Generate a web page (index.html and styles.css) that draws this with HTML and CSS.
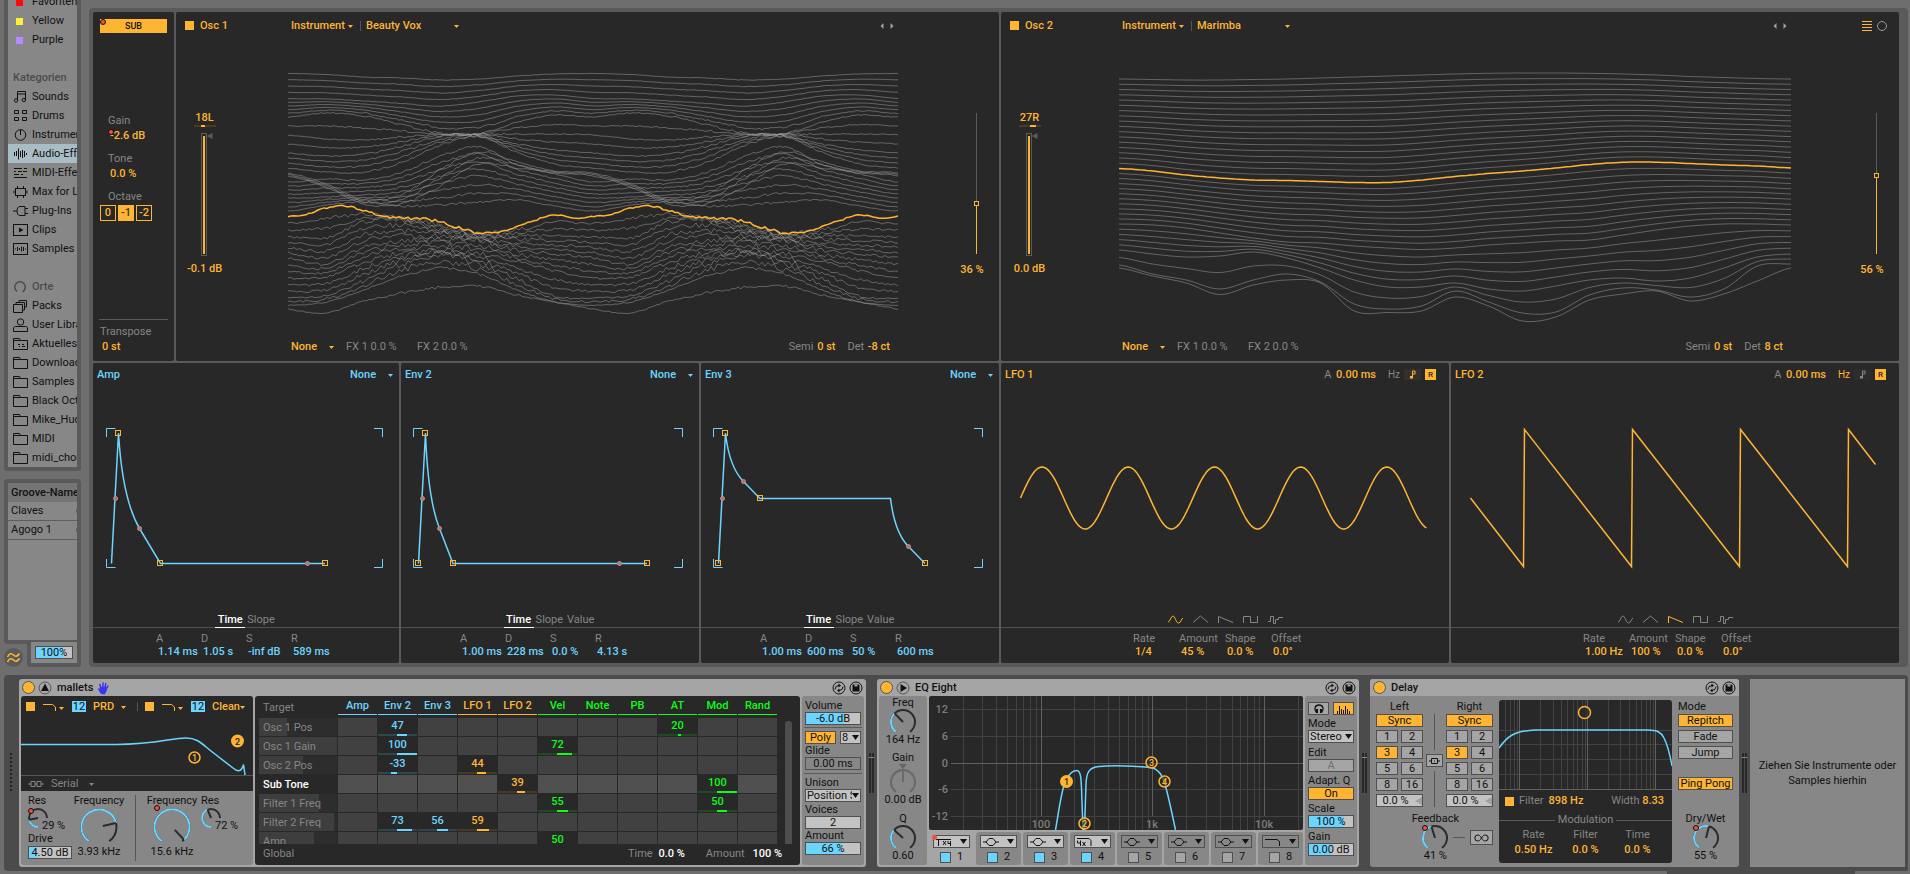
FILE: index.html
```html
<!DOCTYPE html>
<html lang="de">
<head>
<meta charset="utf-8">
<title>Wavetable – mallets</title>
<link rel="stylesheet" href="styles.css">
</head>
<body>
<svg class="sprite" aria-hidden="true">
  <symbol id="i-sounds" viewBox="0 0 16 14"><path d="M4.500 10.500V1.500h8v8.500M4.500 4h8"/><circle cx="3" cy="10.500" r="1.700"/><circle cx="10.800" cy="10" r="1.700"/></symbol>
  <symbol id="i-drums" viewBox="0 0 16 14"><path d="M1.500 1.500h4v3h-4zM9.500 1.500h4v3h-4zM1.500 8.500h4v3h-4zM9.500 8.500h4v3h-4z"/></symbol>
  <symbol id="i-instr" viewBox="0 0 16 14"><circle cx="7.500" cy="7" r="5.300"/><path d="M7.500 1.500V7"/></symbol>
  <symbol id="i-audio" viewBox="0 0 16 14"><path d="M1.500 5v4M3.500 4v5M5.500 1.500v11M7.500 4v6M9.500 3v8M11.500 4v6M13.500 6v2"/></symbol>
  <symbol id="i-midi" viewBox="0 0 16 14"><path d="M1 2.500h8M11 2.500h3M1 5.500h2M5 5.500h4M10 5.500h4M1 8.500h5M8 8.500h2M1 11.500h13"/></symbol>
  <symbol id="i-max" viewBox="0 0 16 14"><rect x="2.500" y="3.500" width="10" height="7"/><path d="M4.500 3V1M10.500 3V1M4.500 11v2M10.500 11v2M1 5.500v3M14 5.500v3"/></symbol>
  <symbol id="i-plug" viewBox="0 0 16 14"><path d="M0 7h4M12 2.500H7C5 2.500 4 4.500 4 7s1 4.500 3 4.500h5zM12 4.500h3M12 9.500h3"/></symbol>
  <symbol id="i-clips" viewBox="0 0 16 14"><rect x=".5" y="1.500" width="14" height="11"/><path class="solid" d="M6 4.500L10.500 7 6 9.500z"/></symbol>
  <symbol id="i-samples" viewBox="0 0 16 14"><rect x=".5" y="1.500" width="14" height="11"/><path d="M2.500 6.500v1M4.500 5v4M6.500 6v2M8.500 4.500v5M10.500 5v4M12.500 6.500v1"/></symbol>
  <symbol id="i-orte" viewBox="0 0 16 14"><path d="M4 11.500A5.300 5.300 0 1 1 9.500 11.800" stroke-width="1.500"/></symbol>
  <symbol id="i-packs" viewBox="0 0 16 14"><path d="M.5 5.500h9v8h-9zM3 5V3.500h8.500V11H10M6 3V1.500h7.500V8H12"/></symbol>
  <symbol id="i-user" viewBox="0 0 16 14"><circle cx="7.500" cy="4" r="3.200"/><path d="M.5 13.500V10c0-1 1-1.500 2-1.500h10c1 0 2 .5 2 1.500v3.500z"/></symbol>
  <symbol id="i-recent" viewBox="0 0 16 14"><path d="M.5 12.500v-11h6l1 2h7v9zM.5 3.500h7M5 7.500h2M9 7.500h2M6 9.500h1M9 9.500h3"/></symbol>
  <symbol id="i-folder" viewBox="0 0 16 14"><path d="M.5 12.500v-11h6l1 2h7v9zM.5 3.500h7"/></symbol>
  <symbol id="i-swap" viewBox="0 0 14 14"><circle cx="7" cy="7" r="6"/><path d="M3 8.500L4 5.500 7 4.500M11 5.500L10 8.500 7 9.500"/><path class="solid" d="M6.500 2.500l2.500 2-2.500 2zM7.500 7.500l-2.500 2 2.500 2z"/></symbol>
  <symbol id="i-save" viewBox="0 0 14 14"><circle cx="7" cy="7" r="6"/><path class="solid" d="M3.500 3.500h6l1 1v6h-7z"/><path class="notch" d="M5.500 3.500h3v2h-3z"/></symbol>
  <symbol id="i-note" viewBox="0 0 7 9"><path d="M3.500 8V1H6v3H3.500"/><path class="solid" d="M1 6h3v2.500H1z"/></symbol>
  <symbol id="w-sine" viewBox="0 0 15 9"><path d="M0 7C2 7 3 1 5 1S8 8 10.500 8 13 4 15 3"/></symbol>
  <symbol id="w-tri" viewBox="0 0 15 9"><path d="M0 7.500l7.500-6.500L15 7.500"/></symbol>
  <symbol id="w-saw" viewBox="0 0 15 9"><path d="M.5 8V1.500L15 7.500"/></symbol>
  <symbol id="w-square" viewBox="0 0 15 9"><path d="M.5 8V1.500h7v6h7V1"/></symbol>
  <symbol id="w-random" viewBox="0 0 15 9"><path d="M0 6.500h2.500v-5h3v7h2v-4h3v-2H15"/></symbol>
  <symbol id="f-low" viewBox="0 0 15 8"><path d="M0 1.500h9.500l3 2.500v4"/></symbol>
  <symbol id="f-bell" viewBox="0 0 16 10"><path d="M0 5h3l3-3.500h4L13 5h3M3 5l3 3.500h4L13 5"/></symbol>
</svg>

<div class="workspace">
  <aside class="sidebar">
    <nav class="browser" aria-label="Browser">
      <ul class="browser-list">
        <li><i class="swatch red"></i>Favoriten</li>
        <li><i class="swatch yellow"></i>Yellow</li>
        <li><i class="swatch purple"></i>Purple</li>
        <li></li>
        <li class="heading">Kategorien</li>
        <li><svg><use href="#i-sounds"/></svg>Sounds</li>
        <li><svg><use href="#i-drums"/></svg>Drums</li>
        <li><svg><use href="#i-instr"/></svg>Instrumente</li>
        <li class="selected"><svg><use href="#i-audio"/></svg>Audio-Effekte</li>
        <li><svg><use href="#i-midi"/></svg>MIDI-Effekte</li>
        <li><svg><use href="#i-max"/></svg>Max for Live</li>
        <li><svg><use href="#i-plug"/></svg>Plug-Ins</li>
        <li><svg><use href="#i-clips"/></svg>Clips</li>
        <li><svg><use href="#i-samples"/></svg>Samples</li>
        <li></li>
        <li class="heading"><svg><use href="#i-orte"/></svg>Orte</li>
        <li><svg><use href="#i-packs"/></svg>Packs</li>
        <li><svg><use href="#i-user"/></svg>User Library</li>
        <li><svg><use href="#i-recent"/></svg>Aktuelles Projekt</li>
        <li><svg><use href="#i-folder"/></svg>Downloads</li>
        <li><svg><use href="#i-folder"/></svg>Samples</li>
        <li><svg><use href="#i-folder"/></svg>Black Octopus</li>
        <li><svg><use href="#i-folder"/></svg>Mike_Huckaby</li>
        <li><svg><use href="#i-folder"/></svg>MIDI</li>
        <li><svg><use href="#i-folder"/></svg>midi_chords</li>
      </ul>
    </nav>
    <div class="groove">
      <div class="groove-list">
        <h2>Groove-Name</h2>
        <p>Claves<i class="ring"></i></p>
        <p>Agogo 1<i class="ring"></i></p>
      </div>
      <div class="groove-foot">
        <button class="groove-button" aria-label="Groove Pool"><svg viewBox="0 0 19 19"><path d="M3.500 9c2-4 4-4 6-2s4 1.500 6-1.500M3.500 14c2-4 4-4 6-2s4 1.500 6-1.500"/></svg></button>
        <div class="groove-tab"><input class="field fill-76" value="100%" aria-label="Globaler Groove-Anteil"></div>
      </div>
    </div>
  </aside>

  <main class="instrument">
    <div class="half left">
      <div class="row-top">
        <section class="panel sub">
          <button class="sub-button">SUB<i class="dot"></i></button>
          <dl class="sub-values">
            <dt>Gain</dt><dd><i class="dot"></i>-2.6 dB</dd>
            <dt>Tone</dt><dd>0.0 %</dd>
            <dt>Octave</dt>
          </dl>
          <div class="octaves"><button>0</button><button class="on">-1</button><button>-2</button></div>
          <dl class="transpose"><dt>Transpose</dt><dd>0 st</dd></dl>
        </section>
        <section class="panel osc osc-1">
          <label class="osc-name"><input type="checkbox" class="tick" checked>Osc 1</label>
          <div class="osc-bar">
            <select class="pick cat" aria-label="Kategorie"><option>Instrument</option></select>
            <select class="pick table" aria-label="Wavetable"><option>Beauty Vox</option></select>
            <span class="steps"><button aria-label="Zurück"><svg viewBox="0 0 4 6"><path d="M3.500 0v6L.5 3z"/></svg></button><button aria-label="Weiter"><svg viewBox="0 0 4 6"><path d="M.5 0v6l3-3z"/></svg></button></span>
          </div>
          <div></div>
          <div class="mix">
            <output>18L</output><i class="pan pan-l"></i>
            <div class="level"><input type="range" class="fader" aria-label="Osc 1 Gain" value="98"><i class="mark"></i></div>
            <output>-0.1 dB</output>
          </div>
          <svg class="wave" id="wave1" viewBox="0 0 610 292" preserveAspectRatio="none"></svg>
          <div class="position"><input type="range" class="line p36" aria-label="Osc 1 Position" value="35"><output>36 %</output></div>
          <div class="osc-foot">
            <select class="pick none" aria-label="Effekt"><option>None</option></select>
            <span class="fx">FX 1 0.0 %</span><span class="fx">FX 2 0.0 %</span>
            <span class="semi">Semi <b>0 st</b></span><span class="det">Det <b>-8 ct</b></span>
          </div>
        </section>
      </div>
      <div class="row-bottom envs">
        <section class="panel env">
          <header><h3>Amp</h3><select class="pick none" aria-label="Amp Loop"><option>None</option></select></header>
          <svg class="graph" viewBox="0 0 306 226">
            <path class="corner" d="M13.500 51v-8.500h9M281 42.500h8.500V51M13.500 173v8.500h9M281 181.500h8.500V173"/>
            <path class="curve" d="M18.500 177.500L25.500 47C28 90 34 121 46.500 142.500L67.500 177.500H232"/>
            <g class="mid"><circle cx="22.500" cy="112.500" r="2"/><circle cx="46.500" cy="142.500" r="2"/><circle cx="214.500" cy="177.500" r="2"/></g>
            <g class="node"><rect x="22.500" y="44.500" width="5" height="5"/><rect x="64.500" y="174.500" width="5" height="5"/><rect x="229.500" y="174.500" width="5" height="5"/></g>
          </svg>
          <div class="tabs"><button class="on">Time</button><button>Slope</button></div>
          <dl class="params"><div><dt>A</dt><dd>1.14 ms</dd></div><div><dt>D</dt><dd>1.05 s</dd></div><div><dt>S</dt><dd>-inf dB</dd></div><div><dt>R</dt><dd>589 ms</dd></div></dl>
        </section>
        <section class="panel env">
          <header><h3>Env 2</h3><select class="pick none" aria-label="Env 2 Loop"><option>None</option></select></header>
          <svg class="graph" viewBox="0 0 298 226">
            <path class="corner" d="M12.500 51v-8.500h9M273 42.500h8.500V51M12.500 173v8.500h9M273 181.500h8.500V173"/>
            <path class="curve" d="M17.500 177.500L24.500 47C26 90 30 121 38.500 142.500L52 177.500H246"/>
            <g class="mid"><circle cx="21.500" cy="112.500" r="2"/><circle cx="38.500" cy="142.500" r="2"/><circle cx="218.500" cy="177.500" r="2"/></g>
            <g class="node"><rect x="14.500" y="174.500" width="5" height="5"/><rect x="21.500" y="44.500" width="5" height="5"/><rect x="49.500" y="174.500" width="5" height="5"/><rect x="243.500" y="174.500" width="5" height="5"/></g>
          </svg>
          <div class="tabs"><button class="on">Time</button><button>Slope</button><button>Value</button></div>
          <dl class="params"><div><dt>A</dt><dd>1.00 ms</dd></div><div><dt>D</dt><dd>228 ms</dd></div><div><dt>S</dt><dd>0.0 %</dd></div><div><dt>R</dt><dd>4.13 s</dd></div></dl>
        </section>
        <section class="panel env">
          <header><h3>Env 3</h3><select class="pick none" aria-label="Env 3 Loop"><option>None</option></select></header>
          <svg class="graph" viewBox="0 0 298 226">
            <path class="corner" d="M12.500 51v-8.500h9M273 42.500h8.500V51M12.500 173v8.500h9M273 181.500h8.500V173"/>
            <path class="curve" d="M17.500 177.500L24.500 47C27 70 33 86 42.500 95.500L59 112.500H189.500C192 133 198 151 207.500 160.500L224 177.500"/>
            <g class="mid"><circle cx="21.500" cy="112.500" r="2"/><circle cx="42.500" cy="95.500" r="2"/><circle cx="207.500" cy="160.500" r="2"/></g>
            <g class="node"><rect x="14.500" y="174.500" width="5" height="5"/><rect x="21.500" y="44.500" width="5" height="5"/><rect x="56.500" y="109.500" width="5" height="5"/><rect x="221.500" y="174.500" width="5" height="5"/></g>
          </svg>
          <div class="tabs"><button class="on">Time</button><button>Slope</button><button>Value</button></div>
          <dl class="params"><div><dt>A</dt><dd>1.00 ms</dd></div><div><dt>D</dt><dd>600 ms</dd></div><div><dt>S</dt><dd>50 %</dd></div><div><dt>R</dt><dd>600 ms</dd></div></dl>
        </section>
      </div>
    </div>

    <div class="half right">
      <div class="row-top">
        <section class="panel osc osc-2">
          <label class="osc-name"><input type="checkbox" class="tick" checked>Osc 2</label>
          <div class="osc-bar">
            <select class="pick cat" aria-label="Kategorie"><option>Instrument</option></select>
            <select class="pick table" aria-label="Wavetable"><option>Marimba</option></select>
            <span class="steps"><button aria-label="Zurück"><svg viewBox="0 0 4 6"><path d="M3.500 0v6L.5 3z"/></svg></button><button aria-label="Weiter"><svg viewBox="0 0 4 6"><path d="M.5 0v6l3-3z"/></svg></button></span>
          </div>
          <div class="views">
            <button aria-label="Linear"><svg viewBox="0 0 10 10"><path d="M0 .5h10M0 3.500h10M0 6.500h10M0 9.500h10"/></svg></button>
            <button class="polar" aria-label="Polar"><svg viewBox="0 0 10 10"><circle cx="5" cy="5" r="4.500"/></svg></button>
          </div>
          <div class="mix">
            <output>27R</output><i class="pan pan-r"></i>
            <div class="level"><input type="range" class="fader" aria-label="Osc 2 Gain" value="99"><i class="mark"></i></div>
            <output>0.0 dB</output>
          </div>
          <svg class="wave" id="wave2" viewBox="0 0 672 292" preserveAspectRatio="none"></svg>
          <div class="position"><input type="range" class="line p56" aria-label="Osc 2 Position" value="56"><output>56 %</output></div>
          <div class="osc-foot">
            <select class="pick none" aria-label="Effekt"><option>None</option></select>
            <span class="fx">FX 1 0.0 %</span><span class="fx">FX 2 0.0 %</span>
            <span class="semi">Semi <b>0 st</b></span><span class="det">Det <b>8 ct</b></span>
          </div>
        </section>
      </div>
      <div class="row-bottom lfos">
        <section class="panel lfo">
          <header><h3>LFO 1</h3><span class="attack">A <b>0.00 ms</b></span><button class="hz">Hz</button><button class="note on" aria-label="Sync"><svg><use href="#i-note"/></svg></button><button class="retrig">R</button></header>
          <svg class="graph" viewBox="0 0 448 226"><path class="curve" id="sine"/></svg>
          <div class="shapes">
            <button class="on" aria-label="Sinus"><svg><use href="#w-sine"/></svg></button><button aria-label="Dreieck"><svg><use href="#w-tri"/></svg></button><button aria-label="Sägezahn"><svg><use href="#w-saw"/></svg></button><button aria-label="Rechteck"><svg><use href="#w-square"/></svg></button><button aria-label="Zufall"><svg><use href="#w-random"/></svg></button>
          </div>
          <dl class="params"><div><dt>Rate</dt><dd>1/4</dd></div><div><dt>Amount</dt><dd>45 %</dd></div><div><dt>Shape</dt><dd>0.0 %</dd></div><div><dt>Offset</dt><dd>0.0°</dd></div></dl>
        </section>
        <section class="panel lfo">
          <header><h3>LFO 2</h3><span class="attack">A <b>0.00 ms</b></span><button class="hz on">Hz</button><button class="note" aria-label="Sync"><svg><use href="#i-note"/></svg></button><button class="retrig">R</button></header>
          <svg class="graph" viewBox="0 0 448 226"><path class="curve" d="M19.500 112L72.500 180.500L73.500 43.500L180.500 180.500L181.500 43.500L288.500 180.500L289.500 43.500L396.500 180.500L397.500 43.500L424.500 78.500"/></svg>
          <div class="shapes">
            <button aria-label="Sinus"><svg><use href="#w-sine"/></svg></button><button aria-label="Dreieck"><svg><use href="#w-tri"/></svg></button><button class="on" aria-label="Sägezahn"><svg><use href="#w-saw"/></svg></button><button aria-label="Rechteck"><svg><use href="#w-square"/></svg></button><button aria-label="Zufall"><svg><use href="#w-random"/></svg></button>
          </div>
          <dl class="params"><div><dt>Rate</dt><dd>1.00 Hz</dd></div><div><dt>Amount</dt><dd>100 %</dd></div><div><dt>Shape</dt><dd>0.0 %</dd></div><div><dt>Offset</dt><dd>0.0°</dd></div></dl>
        </section>
      </div>
    </div>
  </main>
</div>

<footer class="chain">
  <i class="grip"></i>
  <section class="device wavetable">
    <header class="title"><button class="power" aria-label="Gerät ein"></button><button class="round" aria-label="Ausklappen"><svg viewBox="0 0 14 14"><circle cx="7" cy="7" r="6"/><path class="solid" d="M7 2.500L11 10H3z"/></svg></button><h2>mallets</h2>
      <svg class="hand" viewBox="0 0 11 12"><path d="M3 10.500L.8 7M3 6L1.800 2.500M5 5V1M7 5.500L7.800 1.500M8 7.500l2-3.500"/><path class="palm" d="M2.500 5.500h5.500v3l-1.500 3h-2.500l-1.500-2z"/></svg>
      <button class="round end" aria-label="Hot-Swap"><svg><use href="#i-swap"/></svg></button><button class="round" aria-label="Speichern"><svg><use href="#i-save"/></svg></button></header>
    <div class="body">
      <div class="filters">
        <div class="filter-bar">
          <input type="checkbox" class="tick" checked aria-label="Filter 1"><button class="ftype" aria-label="Filtertyp 1"><svg><use href="#f-low"/></svg></button><button class="slope">12</button>
          <select class="pick circ" aria-label="Schaltung 1"><option>PRD</option></select>
          <i class="sep"></i>
          <input type="checkbox" class="tick" checked aria-label="Filter 2"><button class="ftype" aria-label="Filtertyp 2"><svg><use href="#f-low"/></svg></button><button class="slope">12</button>
          <select class="pick clean" aria-label="Schaltung 2"><option>Clean</option></select>
        </div>
        <svg class="filter-curve" viewBox="0 0 232 58">
          <path class="curve" d="M0 27.500H95C135 27.500 150 21 165 21C176 21 180 26 190 34L212 51C216 54.500 219 54.500 220.500 52C222 50 222 49 222.500 47.500L224 58"/>
          <circle class="ring-node" cx="173.500" cy="40.500" r="5.500"/><text class="n" x="173.500" y="44">1</text>
          <circle class="full-node" cx="216.500" cy="24" r="6.500"/><text class="n dark" x="216.500" y="27.500">2</text>
        </svg>
        <div class="routing"><svg viewBox="0 0 16 6"><path d="M0 3h3M7 3h2M13 3h3M3 .5h4v5H3zM9 .5h4v5H9z"/></svg><select class="pick serial" aria-label="Routing"><option>Serial</option></select></div>
        <div class="filter-knobs">
          <div class="res"><span>Res</span><span class="knob-wrap"><svg class="knob small" data-start="180" data-sweep="270" data-value="0.29"></svg><i class="dot"></i></span><output>29 %</output><label for="drive">Drive</label><input class="field fill-20" id="drive" value="4.50 dB"></div>
          <div class="freq"><span>Frequency</span><svg class="knob big" data-value="0.767"></svg><output>3.93 kHz</output></div>
          <i class="rule"></i>
          <div class="freq"><span>Frequency</span><span class="knob-wrap"><svg class="knob big" data-value="0.975"></svg><i class="dot"></i></span><output>15.6 kHz</output></div>
          <div class="res second"><span>Res</span><svg class="knob small" data-start="180" data-sweep="270" data-value="0.585"></svg><output>72 %</output></div>
        </div>
      </div>
      <div class="matrix">
        <div class="matrix-view"><table id="matrix"></table><i class="thumb"></i></div>
        <div class="matrix-foot"><span>Global</span><span class="time">Time <b>0.0 %</b></span><span class="amt">Amount <b>100 %</b></span></div>
      </div>
      <div class="side voices">
        <label for="vol">Volume</label><input class="field fill-70" id="vol" value="-6.0 dB">
        <hr>
        <div class="pair"><button class="btn on">Poly</button><select class="drop" aria-label="Stimmen"><option>8</option></select></div>
        <label for="glide">Glide</label><input class="field flat" id="glide" value="0.00 ms">
        <hr>
        <label for="uni">Unison</label><select class="drop" id="uni"><option>Position Spread</option></select>
        <label for="voi">Voices</label><input class="field" id="voi" value="2">
        <label for="amo">Amount</label><input class="field fill-66" id="amo" value="66 %">
      </div>
    </div>
  </section>
  <i class="meter"></i>
  <section class="device eq">
    <header class="title"><button class="power" aria-label="Gerät ein"></button><button class="round" aria-label="Ausklappen"><svg viewBox="0 0 14 14"><circle cx="7" cy="7" r="6"/><path class="solid" d="M4.500 3L11 7l-6.500 4z"/></svg></button><h2>EQ Eight</h2>
      <button class="round end" aria-label="Hot-Swap"><svg><use href="#i-swap"/></svg></button><button class="round" aria-label="Speichern"><svg><use href="#i-save"/></svg></button></header>
    <div class="body">
      <div class="side dials">
        <span>Freq</span><svg class="knob" data-value="0.347"></svg><output>164 Hz</output>
        <span class="gain">Gain</span><i class="tip"></i><svg class="knob off" data-value="0.5"></svg><output>0.00 dB</output>
        <span class="q">Q</span><svg class="knob" data-value="0.333"></svg><output>0.60</output>
      </div>
      <div class="eq-main">
        <svg class="eq-graph" viewBox="0 0 374 134">
          <path class="grid" id="eq-grid"/><path class="grid major" id="eq-major"/>
          <g class="scale"><text x="19" y="17">12</text><text x="19" y="44">6</text><text x="19" y="71">0</text><text x="19" y="97">-6</text><text x="19" y="124">-12</text></g>
          <g class="scale mid-text"><text x="112" y="132">100</text><text x="223" y="132">1k</text><text x="335" y="132">10k</text></g>
          <path class="curve" d="M126.500 134C131 108 133 90 137.500 83C141 77 144 74.500 147.500 74.500C151 74.500 152 79 152.500 92L154 134M155.500 134L157 88C157.500 76 160 71.500 170 70.500C185 69 205 70 222 71.500C230 73 234 80 236.500 90C240 103 243 117 246.500 134"/>
          <circle class="full-node" cx="137.500" cy="85.500" r="6.500"/><circle class="ring-node" cx="155.500" cy="127.500" r="5.500"/><circle class="ring-node" cx="222.500" cy="66.500" r="5.500"/><circle class="ring-node" cx="235.500" cy="85.500" r="5.500"/>
          <text class="n dark" x="137.500" y="89">1</text><text class="n" x="155.500" y="131">2</text><text class="n" x="222.500" y="70">3</text><text class="n" x="235.500" y="89">4</text>
        </svg>
        <div class="bands">
          <div class="band selected"><button aria-label="Typ 1"><svg viewBox="0 0 16 10"><path d="M0 2.500h15M2.500 3v6M7 4l3 4M10 4l-3 4M12 4v2.500h3M14.500 4v5"/></svg></button><i class="dot"></i><label><input type="checkbox" checked>1</label></div>
          <div class="band lit"><button aria-label="Typ 2"><svg><use href="#f-bell"/></svg></button><label><input type="checkbox" checked>2</label></div>
          <div class="band lit"><button aria-label="Typ 3"><svg><use href="#f-bell"/></svg></button><label><input type="checkbox" checked>3</label></div>
          <div class="band lit"><button aria-label="Typ 4"><svg viewBox="0 0 16 10"><path d="M0 1.500h12l2 2V9M.5 3.500V6h3M3.500 3.500V9M5.500 5l3 4M8.500 5l-3 4"/></svg></button><label><input type="checkbox" checked>4</label></div>
          <div class="band"><button aria-label="Typ 5"><svg><use href="#f-bell"/></svg></button><label><input type="checkbox">5</label></div>
          <div class="band"><button aria-label="Typ 6"><svg><use href="#f-bell"/></svg></button><label><input type="checkbox">6</label></div>
          <div class="band"><button aria-label="Typ 7"><svg><use href="#f-bell"/></svg></button><label><input type="checkbox">7</label></div>
          <div class="band"><button aria-label="Typ 8"><svg viewBox="0 0 16 10"><path d="M0 2.500h12l2.500 2V9"/></svg></button><label><input type="checkbox">8</label></div>
        </div>
      </div>
      <div class="side eq-side">
        <div class="pair"><button class="btn" aria-label="Audition"><svg viewBox="0 0 10 10"><path d="M2.500 8.500C-.5 5 1 1 5 1s5.500 4 2.500 7.500" stroke-width="1.300"/><path d="M3 5v4M7 5v4" stroke-width="2"/></svg></button><button class="btn on" aria-label="Analyzer"><svg viewBox="0 0 14 10"><path d="M.5 7v3M2.500 2v8M4.500 5v5M6.500 6v4M8.500 2v8M10.500 5v5M12.500 7v3"/></svg></button></div>
        <label for="mode">Mode</label><select class="drop" id="mode"><option>Stereo</option></select>
        <span>Edit</span><button class="btn dim">A</button>
        <span>Adapt. Q</span><button class="btn on">On</button>
        <label for="scl">Scale</label><input class="field fill-80" id="scl" value="100 %">
        <label for="gn">Gain</label><input class="field fill-50" id="gn" value="0.00 dB">
      </div>
    </div>
  </section>
  <i class="meter"></i>
  <section class="device delay">
    <header class="title"><button class="power" aria-label="Gerät ein"></button><h2>Delay</h2>
      <button class="round end" aria-label="Hot-Swap"><svg><use href="#i-swap"/></svg></button><button class="round" aria-label="Speichern"><svg><use href="#i-save"/></svg></button></header>
    <div class="body">
      <div class="delay-left">
        <div class="times">
          <div class="time-grid"><span>Left</span><button class="btn on wide">Sync</button><button class="btn">1</button><button class="btn">2</button><button class="btn on">3</button><button class="btn">4</button><button class="btn">5</button><button class="btn">6</button><button class="btn">8</button><button class="btn">16</button><input class="field wide offset" value="0.0 %" aria-label="Offset links"></div>
          <div class="link"><i></i><button class="btn" aria-label="Verbinden"><svg viewBox="0 0 11 6"><path d="M0 3h3M8 3h3M5 3h1M2.500 .5h6v5h-6z"/></svg></button><i></i></div>
          <div class="time-grid"><span>Right</span><button class="btn on wide">Sync</button><button class="btn">1</button><button class="btn">2</button><button class="btn on">3</button><button class="btn">4</button><button class="btn">5</button><button class="btn">6</button><button class="btn">8</button><button class="btn">16</button><input class="field wide offset" value="0.0 %" aria-label="Offset rechts"></div>
        </div>
        <div class="feedback">
          <div class="dial"><span>Feedback</span><span class="knob-wrap"><svg class="knob" data-value="0.44"></svg><i class="dot"></i></span><output>41 %</output></div>
          <i class="dash"></i>
          <button class="btn inf" aria-label="Freeze"><svg viewBox="0 0 15 8"><path d="M7.500 4C6 1.500 5 1 3.800 1a3 3 0 0 0 0 6C5 7 6 6.500 7.500 4S10 1 11.200 1a3 3 0 0 1 0 6C10 7 9 6.500 7.500 4z"/></svg></button>
        </div>
      </div>
      <div class="delay-filter">
        <svg class="delay-graph" viewBox="0 0 173 90"><path class="grid" id="dl-grid"/><path class="grid major" d="M20.500 0V90M88.500 0V90M156.500 0V90M0 89.500H173"/><path class="curve" d="M0 48C8 37 14 31 36 30H149C158 30 162 32 165 38C169 46 171 55 173 66"/><circle class="ring-node" cx="85.500" cy="12.500" r="6"/></svg>
        <div class="delay-row"><label><input type="checkbox" class="tick" checked>Filter</label><b>898 Hz</b><span class="width">Width <b>8.33</b></span></div>
        <div class="legend">Modulation</div>
        <dl class="mods"><div><dt>Rate</dt><dd>0.50 Hz</dd></div><div><dt>Filter</dt><dd>0.0 %</dd></div><div><dt>Time</dt><dd>0.0 %</dd></div></dl>
      </div>
      <div class="delay-mode">
        <span>Mode</span><button class="btn on">Repitch</button><button class="btn">Fade</button><button class="btn">Jump</button><button class="btn on ping">Ping Pong</button>
        <div class="dial"><span>Dry/Wet</span><span class="knob-wrap"><svg class="knob" data-value="0.55"></svg><i class="dot"></i></span><output>55 %</output></div>
      </div>
    </div>
  </section>
  <i class="meter"></i>
  <p class="dropzone">Ziehen Sie Instrumente oder Samples hierhin</p>
</footer>
<div class="overview"><i></i></div>
<script src="app.js"></script>
</body>
</html>
```

FILE: styles.css
```css
:root {
  --orange: #ffb532;
  --blue: #6cd5ff;
  --green: #0cff14;
  --dark: #282828;
  --frame: #5a5a5a;
  --mid: #878787;
  --light: #a5a5a5;
  --pale: #c3c3c3;
  --ink: #111;
  --dim: #868686;
}
* { box-sizing: border-box; }
body {
  margin: 0;
  min-height: 100vh;
  display: flex;
  flex-direction: column;
  overflow: hidden;
  background: #6e6e6e;
  color: var(--ink);
  font: 11px/14px Roboto, "Liberation Sans", sans-serif;
}
h2, h3, p, ul, dl, dd { margin: 0; padding: 0; font-size: 11px; font-weight: 400; }
ul { list-style: none; }
i { font-style: normal; }
b, h3 { font-weight: 500; }
button, input, select { margin: 0; padding: 0; border: 0; background: none; color: inherit; font: inherit; appearance: none; border-radius: 0; }
button { display: flex; align-items: center; justify-content: center; }
svg { display: block; fill: none; stroke: currentColor; overflow: visible; }
symbol { overflow: visible; }
.solid { fill: currentColor; stroke: none; }
.notch { fill: var(--light); stroke: none; }
.sprite { position: absolute; width: 0; height: 0; }
.dot { position: absolute; width: 6px; height: 6px; border-radius: 50%; border: 1px solid #111; background: #f5503c; }

.workspace { flex: 1 1 640px; display: flex; gap: 8px; padding: 0 2px 0 4px; min-height: 0; }

.sidebar { width: 77px; min-height: 0; display: flex; flex-direction: column; gap: 8px; }
.browser { flex: 1; height: 0; display: flex; flex-direction: column; justify-content: flex-end; overflow: hidden; border: 4px solid var(--frame); border-top: 0; border-radius: 0 0 4px 4px; background: var(--mid); }
.browser-list li { display: flex; align-items: center; gap: 3px; height: 19px; padding: 1px 0 0 5px; white-space: nowrap; overflow: hidden; }
.browser-list svg { width: 16px; height: 14px; flex: none; }
.browser-list .selected { background: #a9bdc6; }
.browser-list .heading { color: #4c4c4c; font-weight: 500; }
.swatch { width: 7px; height: 7px; margin: 0 6px 0 3px; flex: none; }
.red { background: #ff0a0a; }
.yellow { background: #fff034; }
.purple { background: #b48cff; }
.groove-list { height: 165px; border: 4px solid var(--frame); border-radius: 4px 4px 0 4px; background: var(--mid); overflow: hidden; }
.groove-list h2 { padding-left: 3px; height: 19px; line-height: 19px; background: #757575; font-weight: 500; white-space: nowrap; }
.groove-list p { display: flex; align-items: center; height: 19px; padding-left: 3px; border-bottom: 1px solid #5e5e5e; }
.ring { width: 8px; height: 8px; margin: 0 -7px 0 auto; border: 1px solid #555; border-radius: 50%; }
.groove-foot { display: flex; justify-content: space-between; height: 23px; }
.groove-button { width: 19px; height: 19px; margin-top: 4px; border-radius: 50%; background: var(--frame); color: var(--orange); }
.groove-button svg { width: 19px; stroke-width: 1.600; }
.groove-tab { width: 54px; margin-top: -2px; padding: 4px; height: 25px; border: 4px solid var(--frame); border-top: 0; border-radius: 0 0 4px 4px; background: var(--mid); }

.instrument { flex: 1; min-width: 0; min-height: 0; display: grid; grid-template-rows: minmax(0, 1fr); grid-template-columns: 906fr 898fr; gap: 2px; margin-top: 8px; border: 4px solid var(--frame); border-right-width: 9px; border-radius: 4px; background: var(--frame); }
.half { display: grid; grid-template-rows: minmax(0, 349fr) minmax(0, 300fr); gap: 2px; min-width: 0; min-height: 0; }
.row-top, .row-bottom { display: grid; grid-template-rows: minmax(0, 1fr); gap: 2px; min-width: 0; min-height: 0; }
.left .row-top { grid-template-columns: 81px 1fr; }
.envs { grid-template-columns: 306fr 298fr 298fr; }
.lfos { grid-template-columns: 1fr 1fr; }
.panel { min-width: 0; min-height: 0; border-radius: 2px; background: var(--dark); color: var(--dim); }

.sub { display: flex; flex-direction: column; padding: 7px 6px 7px 7px; }
.sub-button { position: relative; width: 67px; height: 14px; background: var(--orange); color: #111; font-size: 9px; font-weight: 500; }
.sub-button .dot { left: 0; top: 0; }
.sub-values { padding: 81px 0 0 8px; }
.sub-values dt { height: 15px; }
.sub-values dd { position: relative; height: 23px; padding-left: 2px; }
.sub-values .dot { left: 0; top: 0; }
.sub dd { color: var(--orange); font-weight: 500; }
.octaves { display: flex; gap: 2px; }
.octaves button { width: 16px; height: 16px; border: 1px solid var(--orange); color: var(--orange); font-weight: 500; }
.octaves .on { background: var(--orange); color: #333; }
.transpose { margin: auto 0 0 -1px; padding: 5px 0 0 1px; border-top: 1px solid #5a5a5a; }
.transpose dd { padding: 1px 0 0 2px; }

.osc { display: grid; grid-template-rows: 27px minmax(0, 1fr) 30px; grid-template-columns: 112px 1fr 101px; }
.osc-2 { grid-template-columns: 118px 1fr 108px; }
.osc-name { display: flex; align-items: center; gap: 6px; padding-left: 9px; color: var(--orange); font-weight: 500; }
.tick { width: 9px; height: 9px; flex: none; border: 1px solid var(--orange); }
.tick:checked { background: var(--orange); }
.osc-bar, .osc-foot { display: flex; align-items: center; padding-left: 3px; white-space: nowrap; }
.pick { height: 14px; color: var(--orange); font-weight: 500; background: url("data:image/svg+xml,%3Csvg xmlns='http://www.w3.org/2000/svg' width='5' height='3'%3E%3Cpath d='M0 0h5L2.500 3z' fill='%23ffb532'/%3E%3C/svg%3E") no-repeat right 6px; }
.env .pick { color: var(--blue); background-image: url("data:image/svg+xml,%3Csvg xmlns='http://www.w3.org/2000/svg' width='5' height='3'%3E%3Cpath d='M0 0h5L2.500 3z' fill='%236cd5ff'/%3E%3C/svg%3E"); }
.cat { width: 62px; margin-right: 7px; }
.table { width: 99px; height: 10px; padding-left: 5px; border-left: 1px solid #555; line-height: 10px; background-position: right 4px; }
.none { width: 43px; }
.steps { display: flex; gap: 6px; margin-left: auto; padding-right: 4px; color: #a0a0a0; }
.steps svg { width: 4px; height: 6px; fill: currentColor; stroke: none; }
.views { display: flex; align-items: center; justify-content: flex-end; gap: 5px; padding-right: 12px; color: var(--orange); }
.views svg { width: 10px; height: 10px; }
.polar { color: #999; }
.mix { width: 57px; padding-top: 72px; display: flex; flex-direction: column; align-items: center; color: var(--orange); font-weight: 500; }
.mix output:last-child { margin-top: 6px; }
.pan { width: 22px; height: 2px; background: linear-gradient(90deg, #4c3b20 7px, var(--orange) 7px 11px, #4c3b20 11px); }
.pan-r { background: linear-gradient(90deg, #4c3b20 11px, var(--orange) 11px 17px, #4c3b20 17px); }
.level { display: flex; margin-top: 6px; padding-left: 4px; }
.fader { writing-mode: vertical-lr; direction: rtl; width: 6px; height: 123px; border: 1px solid #5a5a5a; padding: 0; background: linear-gradient(var(--orange), var(--orange)) no-repeat center bottom 1px / 2px 118px; }
.fader::-webkit-slider-thumb { appearance: none; width: 1px; height: 1px; background: none; }
.mark { width: 6px; height: 6px; background: #5a5a5a; clip-path: polygon(0 50%, 100% 0, 100% 100%); }
.wave { width: 100%; height: 100%; min-height: 0; }
.wave path { stroke: #a0a0a0; stroke-opacity: .5; stroke-width: 1; vector-effect: non-scaling-stroke; }
.wave .active { stroke: var(--orange); stroke-opacity: 1; stroke-width: 1.500; }
.position { width: 54px; margin-left: auto; padding-top: 74px; display: flex; flex-direction: column; align-items: center; color: var(--orange); font-weight: 500; }
.position output { margin-top: 9px; }
.line { writing-mode: vertical-lr; direction: rtl; width: 5px; height: 141px; margin-left: 8px; }
.p36 { background: linear-gradient(#5a5a5a 65%, var(--orange) 65%) no-repeat center / 1px 100%; }
.p56 { background: linear-gradient(#5a5a5a 44%, var(--orange) 44%) no-repeat center / 1px 100%; }
.line::-webkit-slider-thumb { appearance: none; width: 5px; height: 5px; border: 1px solid var(--orange); background: var(--dark); }
.osc-foot { grid-column: 2; padding-top: 2px; }
.fx { width: 58px; margin-left: 12px; }
.fx + .fx { margin-left: 13px; }
.osc-foot b { color: var(--orange); margin-left: 1px; }
.semi { margin-left: auto; }
.det { margin: 0 8px 0 12px; }

.env, .lfo { display: grid; grid-template-rows: 23px minmax(0, 1fr) 16px 35px; }
.panel header { display: flex; align-items: center; padding: 0 6px 0 4px; }
.env header { color: var(--blue); justify-content: space-between; }
.graph { width: 100%; height: 100%; min-height: 0; }
.curve { stroke: var(--blue); stroke-width: 1.500; }
.corner { stroke: var(--blue); }
.mid { stroke: #e08080; fill: var(--mid); stroke-width: 1; }
.node { stroke: var(--orange); }
.lfo .curve { stroke: var(--orange); }
.tabs, .shapes { display: flex; justify-content: center; border-bottom: 1px solid #505050; }
.tabs button { height: 16px; padding: 0 2px; }
.tabs .on { width: 30px; border-bottom: 1px solid #fff; color: #fff; font-weight: 500; }
.params { display: grid; grid-template-columns: repeat(4, 45px); justify-content: center; padding-top: 4px; line-height: 13px; white-space: nowrap; }
.params dd { padding-left: 2px; color: var(--blue); font-weight: 500; }
.lfo .params { grid-template-columns: repeat(4, 46px); }
.lfo .params dd, .lfo h3, .lfo b { color: var(--orange); }
.lfo header { padding-right: 13px; }
.attack { margin-left: auto; }
.attack b { margin-left: 2px; }
.hz { margin: 0 4px 0 12px; font-size: 10px; }
.hz.on, .shapes .on { color: var(--orange); }
.note { width: 17px; height: 11px; background: #2d2d2d; }
.note svg { width: 7px; height: 9px; }
.note.on { background: #37302a; color: var(--orange); }
.retrig { width: 11px; height: 11px; margin-left: 4px; background: var(--orange); color: #222; font-size: 8px; font-weight: 500; line-height: 11px; }
.shapes { gap: 10px; align-items: center; }
.shapes svg { width: 15px; height: 9px; }

.chain { flex: none; display: flex; margin: 8px 2px 0 4px; padding: 4px 3px; border-radius: 4px 4px 0 4px; background: #4b4b4b; }
.grip { width: 2px; height: 38px; margin: 74px 7px 0 3px; background: repeating-linear-gradient(#222 0 2px, transparent 2px 4px); }
.meter { flex: none; width: 5px; height: 40px; margin: 74px 3px 0; background: linear-gradient(transparent 4px, #8a8a8a 4px 5px, transparent 5px), linear-gradient(90deg, #282828 2px, transparent 2px 3px, #282828 3px); }
.device { flex: none; padding: 0 2px 2px; border-radius: 3px; background: var(--light); }
.title { display: flex; align-items: center; gap: 2px; height: 17px; padding: 0 1px; }
.title h2 { margin-left: 3px; padding-top: 1px; font-weight: 500; }
.power { width: 13px; height: 13px; border: 1px solid #555; border-radius: 50%; background: var(--orange); }
.round svg { width: 14px; height: 14px; }
.round circle { stroke: #555; }
.round { margin-left: 1px; }
.end { margin-left: auto; }
.hand { width: 11px; height: 12px; margin-left: 3px; color: #3a36f0; stroke-width: 1.500; stroke-linecap: round; }
.palm { fill: currentColor; }
.body { display: flex; gap: 2px; height: 169px; }
.side { border-radius: 3px; background: var(--mid); }
.field { width: 100%; min-width: 0; height: 13px; border: 1px solid #505050; background: var(--pale); text-align: center; display: block; }
.flat { background: var(--mid); }
.fill-76 { background: linear-gradient(90deg, var(--blue) 76%, var(--pale) 76%); }
.fill-70 { background: linear-gradient(90deg, var(--blue) 70%, var(--pale) 70%); }
.fill-20 { background: linear-gradient(90deg, var(--blue) 20%, var(--pale) 20%); }
.fill-66 { background: linear-gradient(90deg, var(--blue) 66%, var(--pale) 66%); }
.fill-80 { background: linear-gradient(90deg, var(--blue) 80%, var(--pale) 80%); }
.fill-50 { background: linear-gradient(90deg, var(--blue) 50%, var(--pale) 50%); }
.drop { width: 100%; min-width: 0; height: 13px; padding: 0 8px 0 1px; border: 1px solid #505050; background: var(--pale) url("data:image/svg+xml,%3Csvg xmlns='http://www.w3.org/2000/svg' width='7' height='5'%3E%3Cpath d='M0 0h7L3.500 5z' fill='%23111'/%3E%3C/svg%3E") no-repeat right 1px center; line-height: 11px; }
.btn { height: 13px; border: 1px solid #505050; background: var(--light); line-height: 11px; }
.btn.on { background: var(--orange); }
.btn.dim { color: #707070; }
.pair { display: flex; justify-content: space-between; }
.knob-wrap { position: relative; display: block; width: max-content; }
.knob { width: 26px; height: 25px; stroke-width: 2; }
.knob .track { stroke: #2b2b2b; }
.knob .value { stroke: var(--blue); }
.knob .needle { stroke: #2b2b2b; }
.knob.off .track, .knob.off .value, .knob.off .needle { stroke: #6a6a6a; }
.knob.big { width: 38px; height: 38px; }
.knob.small { width: 20px; height: 20px; }

.filters { width: 232px; border-radius: 3px; overflow: hidden; background: var(--mid); display: flex; flex-direction: column; }
.filter-bar, .filter-curve, .routing { background: var(--dark); color: var(--orange); }
.filter-bar { display: flex; align-items: center; height: 21px; padding-left: 5px; }
.ftype { width: 21px; margin: 0 8px; justify-content: flex-start; background: url("data:image/svg+xml,%3Csvg xmlns='http://www.w3.org/2000/svg' width='5' height='3'%3E%3Cpath d='M0 0h5L2.500 3z' fill='%23ffb532'/%3E%3C/svg%3E") no-repeat right 4px; }
.ftype svg { width: 15px; height: 8px; }
.slope { width: 14px; height: 11px; background: var(--blue); color: #111; }
.circ { width: 33px; margin-left: 7px; }
.sep { width: 1px; height: 9px; margin: 0 7px 0 11px; background: #555; }
.clean { width: 33px; margin-left: 7px; }
.filter-curve { width: 232px; height: 58px; overflow: hidden; }
.ring-node { stroke: var(--orange); stroke-width: 1.500; fill: rgba(40, 40, 40, .6); }
.full-node { fill: var(--orange); stroke: none; }
.n { fill: var(--orange); stroke: none; font-size: 9px; font-weight: 500; text-anchor: middle; }
.n.dark { fill: #222; }
.routing { display: flex; align-items: center; gap: 7px; height: 16px; padding-left: 7px; border-top: 1px solid #555; color: var(--dim); }
.routing svg { width: 16px; height: 6px; }
.serial { width: 43px; color: var(--dim); font-weight: 400; background-image: url("data:image/svg+xml,%3Csvg xmlns='http://www.w3.org/2000/svg' width='5' height='3'%3E%3Cpath d='M0 0h5L2.500 3z' fill='%23868686'/%3E%3C/svg%3E"); }
.filter-knobs { display: flex; padding: 3px 0 0 7px; }
.res { width: 44px; }
.second { margin-left: 2px; }
.res span, .res output, .res label { display: block; }
.res output { height: 12px; margin: -8px 0 0 14px; line-height: 12px; }
.res .dot { left: 0; top: 0; }
.freq { width: 54px; display: flex; flex-direction: column; align-items: center; }
.freq output { line-height: 12px; }
.freq .dot { left: 1px; top: -3px; }
.rule { width: 1px; height: 66px; margin: 1px 9px 0; background: #555; }

.matrix { width: 545px; border-radius: 3px; background: var(--dark); color: var(--dim); }
.matrix-view { display: flex; height: 148px; overflow: hidden; padding: 1px 8px 0 3px; justify-content: space-between; }
.matrix table { border-collapse: separate; border-spacing: 1px; table-layout: fixed; width: 520px; height: max-content; }
.matrix th, .matrix td { padding: 0; height: 18px; line-height: 17px; text-align: center; font-weight: 500; }
.matrix thead th { vertical-align: top; line-height: 16px; }
.matrix thead th span { display: block; height: 17px; border-bottom: 1px solid; }
.matrix th:first-child { width: 78px; padding-left: 4px; text-align: left; font-weight: 400; background-color: #2d2d2d; }
.matrix thead th:first-child { line-height: 19px; background: none; }
.matrix td { background-color: #414141; }
.matrix .hot td { background-color: #505050; }
.matrix .hot th:first-child { color: #fff; font-weight: 500; background: none; }
.matrix tr td.set { background-color: var(--dark); background-repeat: no-repeat; background-position: bottom; background-size: 100% 2px; line-height: 14px; vertical-align: top; padding-top: 1px; height: 18px; }
.c-blue { color: var(--blue); --bar: #2f4650; }
.c-orange { color: var(--orange); --bar: #4a3922; }
.c-green { color: var(--green); --bar: #204a22; }
.thumb { width: 7px; margin-top: 24px; border-radius: 3px 3px 0 0; background: #4d4d4d; }
.matrix-foot { display: flex; padding: 3px 18px 0 8px; }
.matrix-foot b { color: #fff; margin-left: 3px; }
.time { margin-left: auto; }
.amt { margin-left: 21px; }
.amt b { margin-left: 5px; }
.voices { width: 62px; padding: 3px 3px 0; }
.side label { display: block; line-height: 13px; }
.voices hr { height: 1px; margin: 2px -1px 3px; border: 0; background: #5c5c5c; }
.voices .pair .btn { width: 31px; }
.voices .pair .drop { width: 21px; }
.voices .flat + hr { margin: 3px -1px 2px; }

.dials { width: 48px; padding-top: 1px; display: flex; flex-direction: column; align-items: center; line-height: 12px; }
.dials .gain { margin-top: 6px; }
.dials .q { margin-top: 7px; }
.tip { width: 8px; height: 5px; background: #666; clip-path: polygon(0 0, 100% 0, 50% 100%); }
.eq-main { width: 374px; display: flex; flex-direction: column; gap: 2px; }
.eq-graph { width: 374px; height: 134px; border-radius: 2px; overflow: hidden; background: var(--dark); }
.grid { stroke: #424242; }
.grid.major { stroke: #606060; }
.scale text { fill: #7d7d7d; stroke: none; font-size: 11px; font-weight: 500; text-anchor: end; }
.mid-text text { text-anchor: middle; }
.bands { display: grid; grid-template-columns: repeat(8, 1fr); gap: 2px; height: 33px; }
.band { position: relative; padding: 3px 4px 0; border-radius: 3px; background: var(--mid); }
.band.selected { background: none; }
.band button { width: 37px; height: 13px; justify-content: flex-start; padding-left: 2px; border: 1px solid #505050; background: url("data:image/svg+xml,%3Csvg xmlns='http://www.w3.org/2000/svg' width='7' height='5'%3E%3Cpath d='M0 0h7L3.500 5z' fill='%23111'/%3E%3C/svg%3E") no-repeat right 2px center; }
.band svg { width: 16px; height: 10px; }
.band.selected button, .band.lit button { background-color: var(--pale); }
.band .dot { left: 3px; top: 3px; width: 5px; height: 5px; border: 0; }
.band label { display: flex; align-items: center; gap: 6px; padding-left: 7px; margin-top: 2px; }
.band input { width: 11px; height: 11px; border: 1px solid #505050; background: var(--light); }
.band input:checked { background: var(--blue); }
.eq-side { width: 52px; padding: 6px 3px 0; }
.eq-side span, .eq-side label { display: block; padding-top: 2px; line-height: 13px; }
.eq-side .pair .btn { width: 21px; }
.eq-side svg { height: 10px; width: 14px; }
.eq-side > .btn { width: 100%; }

.delay { width: 369px; padding: 0; background: var(--mid); }
.delay .title { padding: 0 3px; border-radius: 3px 3px 0 0; background: var(--light); }
.delay .body { gap: 6px; padding: 4px 6px 0; }
.delay-left { width: 117px; }
.times { display: flex; justify-content: space-between; }
.time-grid { display: grid; grid-template-columns: 22px 22px; gap: 3px; }
.time-grid span { grid-column: span 2; height: 11px; line-height: 13px; text-align: center; }
.wide { grid-column: span 2; }
.offset { padding-right: 8px; background: var(--pale) url("data:image/svg+xml,%3Csvg xmlns='http://www.w3.org/2000/svg' width='7' height='8'%3E%3Cpath d='M7 0v8L0 4z' fill='%23a0a0a0'/%3E%3C/svg%3E") no-repeat right center; }
.link { display: flex; flex-direction: column; align-items: center; gap: 4px; padding-top: 14px; }
.link i { width: 1px; flex: 1; background: #555; }
.link .btn { width: 17px; }
.link svg { width: 11px; height: 6px; }
.feedback { display: flex; align-items: center; margin-top: 6px; justify-content: flex-end; }
.dial { display: flex; flex-direction: column; align-items: center; line-height: 12px; }
.dial .dot { left: 0; top: 0; }
.dash { width: 12px; height: 1px; margin: 0 5px 0 -6px; background: #555; }
.inf { width: 23px; height: 15px; }
.inf svg { width: 15px; height: 8px; }
.delay-filter { width: 173px; height: 163px; border-radius: 3px; overflow: hidden; background: var(--dark); color: var(--dim); }
.delay-filter b, .delay-filter dd { color: var(--orange); font-weight: 500; }
.delay-graph { width: 173px; height: 90px; overflow: hidden; }
.delay-row { display: flex; padding: 4px 8px 0 6px; gap: 5px; }
.delay-row label { display: flex; align-items: center; gap: 5px; }
.width { margin-left: auto; }
.legend { display: flex; align-items: center; gap: 3px; margin-top: 5px; }
.legend::before, .legend::after { content: ""; flex: 1; height: 1px; background: #5a5a5a; }
.mods { display: grid; grid-template-columns: repeat(3, 52px); justify-content: center; text-align: center; line-height: 15px; }
.delay-mode { flex: 1; display: flex; flex-direction: column; gap: 3px; }
.delay-mode > span { height: 11px; line-height: 13px; }
.delay-mode .ping { margin-top: 15px; }
.delay-mode .dial { margin-top: 20px; }
.dropzone { flex: 1; display: grid; place-items: center; padding: 0 8px; background: var(--mid); text-align: center; line-height: 15px; }
.overview { flex: none; height: 3px; display: flex; justify-content: flex-end; padding-right: 55px; }
.overview i { width: 188px; background: #4b4b4b; }
```

FILE: app.js
```js
const NS = "http://www.w3.org/2000/svg";

function add(parent, tag, attrs) {
  const el = document.createElementNS(NS, tag);
  for (const k in attrs) el.setAttribute(k, attrs[k]);
  parent.appendChild(el);
  return el;
}

let seed = 7;
function rnd() {
  seed = (seed * 16807) % 2147483647;
  return seed / 2147483647 - 0.5;
}

// Catmull-Rom through evenly spaced samples
function sample(list, t, wrap) {
  const n = list.length;
  const pos = wrap ? (((t % 1) + 1) % 1) * n : t * (n - 1);
  const i = Math.floor(pos);
  const f = pos - i;
  const at = k => wrap ? list[((k % n) + n) % n] : list[Math.max(0, Math.min(n - 1, k))];
  const a = at(i - 1), b = at(i), c = at(i + 1), d = at(i + 2);
  return b + 0.5 * f * (c - a + f * (2 * a - 5 * b + 4 * c - d + f * (3 * (b - c) + d - a)));
}

function blend(keys, i) {
  let k = 0;
  while (k < keys.length - 2 && keys[k + 1][0] < i) k++;
  const [i0, a] = keys[k], [i1, b] = keys[k + 1];
  const f = (i - i0) / (i1 - i0);
  return a.map((v, n) => v + (b[n] - v) * f);
}

const vox = [
  [0, [73.5, 74.5, 77, 78, 80, 79, 76, 74]],
  [4, [98.5, 99, 101, 103.5, 106, 102, 96, 95]],
  [9, [117, 113, 116, 125, 133, 134, 122, 115]],
  [11, [135, 139, 140, 137, 134.5, 134, 134, 134]],
  [13, [153, 156, 154, 146, 136, 135, 144, 150]],
  [16, [168, 172, 172, 162, 145, 137, 152, 164]],
  [17, [173, 184, 200, 194, 170, 152, 162, 171]],
  [19, [176, 187, 204, 204, 186, 164, 168, 173]],
  [20, [182, 179, 180, 172, 156, 147, 164, 174]],
  [24, [198, 197, 195, 192, 183, 176, 184, 192]],
  [27, [211, 205, 202, 206, 205, 202, 200, 206]],
  [28, [217, 208, 211, 218, 221, 232, 227, 215]],
  [31, [237, 238, 222, 220, 229, 236, 236, 236]],
  [35, [258, 264, 247, 241, 239, 241, 250, 254]],
  [38, [278, 277, 262, 253, 250, 253, 262, 271]],
  [41, [298, 296, 281, 264, 255, 264, 279, 296]],
  [43, [305, 302, 290, 276, 268, 274, 290, 302]],
  [44, [309, 313, 301, 293, 287, 286, 295, 302]]
];
const lead = [216.5, 214, 208, 206, 211, 216, 218, 219, 221.5, 228, 232.5, 232, 227, 220, 215, 218];

const wave1 = document.getElementById("wave1");
function voxLine(y, noise, cls) {
  const jitter = [];
  for (let k = 0; k < 102; k++) jitter.push(rnd() * noise);
  let d = "";
  for (let x = 0; x <= 610; x += x < 609 ? 3 : 1) {
    const t = x / 305;
    const busy = 0.5 + 0.9 * Math.pow(Math.sin(Math.PI * t), 2);
    const v = sample(y, t, true) - 39 + jitter[Math.round(x / 3) % 102] * busy;
    d += (d ? "L" : "M") + x + " " + v.toFixed(1);
  }
  add(wave1, "path", { d: d, class: cls });
}
for (let i = 0; i <= 44; i++) {
  if (i !== 28) voxLine(blend(vox, i), i < 8 ? 0.5 : i < 28 ? 1.7 : i < 43 ? 4.5 : 2, "");
}
voxLine(lead, 2, "active");

const marimba = [
  [0, [79, 79.5, 80, 80, 79.5, 79, 78, 77, 76, 75, 74, 73.3, 73, 73, 73.3, 74, 75, 76.5, 77.5, 78.5, 79]],
  [17, [168.5, 171, 175, 178, 180, 180.5, 181.5, 182.5, 182.5, 180, 176.5, 173.5, 171, 168, 164.5, 162.3, 162.2, 163.5, 165, 166, 168]],
  [28, [224, 225, 228, 233, 238, 242, 243, 246, 248, 249.5, 248, 245, 243, 241, 240, 235, 230, 226, 224, 224, 225]],
  [33, [250, 254, 257, 256, 252, 258, 268, 280, 287, 287, 283, 289, 291, 286, 280, 278, 281, 278, 268, 257, 254]],
  [35, [265, 274, 280, 289, 280, 274, 282, 304, 309, 306, 291, 302, 313, 312, 295, 288, 290, 297, 289, 266, 264]],
  [36, [268, 276, 283, 294.5, 285, 280, 283, 311, 312.5, 311, 297, 306, 321, 317, 300, 294, 291, 301, 294, 281, 268]]
];
const wave2 = document.getElementById("wave2");
for (let i = 0; i <= 36; i++) {
  const y = blend(marimba, i);
  let d = "";
  for (let x = 0; x <= 672; x += 4) d += (d ? "L" : "M") + x + " " + (sample(y, x / 672, false) - 39).toFixed(1);
  add(wave2, "path", { d: d, class: i === 17 ? "active" : "" });
}

let sine = "";
for (let x = 0; x <= 406; x += 2) sine += (sine ? "L" : "M") + (19.5 + x) + " " + (112 - 31 * Math.sin(x / 86.2 * 2 * Math.PI)).toFixed(1);
document.getElementById("sine").setAttribute("d", sine);

document.getElementById("eq-grid").setAttribute("d",
  [34, 53, 67, 78, 87, 94, 101, 107, 145, 165, 179, 190, 199, 206, 213, 219, 257, 277, 291, 303, 311, 318, 325, 330, 369].map(x => `M${x + 0.5} 0V134`).join("") +
  [13, 40, 93, 120].map(y => `M22 ${y + 0.5}H374`).join(""));
document.getElementById("eq-major").setAttribute("d", "M112.500 0V120M223.500 0V120M335.500 0V120M22 67.500H374");
document.getElementById("dl-grid").setAttribute("d",
  [6, 11, 15, 18, 41, 54, 62, 68, 74, 78, 83, 86, 109, 121, 130, 137, 142, 147, 151, 154].map(x => `M${x + 0.5} 0V90`).join("") +
  [30, 44, 59, 74].map(y => `M0 ${y + 0.5}H173`).join(""));

function arc(r, from, to) {
  const p = a => [r * Math.sin(a * Math.PI / 180), -r * Math.cos(a * Math.PI / 180)].map(v => v.toFixed(2)).join(" ");
  return `M${p(from)}A${r} ${r} 0 ${to - from > 180 ? 1 : 0} 1 ${p(to)}`;
}
document.querySelectorAll(".knob").forEach(k => {
  const big = k.classList.contains("big"), small = k.classList.contains("small");
  const box = big ? [38, 38, 19] : small ? [20, 20, 10] : [26, 25, 13];
  const r = big ? 17.5 : small ? 9 : 12;
  const start = +(k.dataset.start || -144), sweep = +(k.dataset.sweep || 288);
  const angle = start + sweep * k.dataset.value;
  k.setAttribute("viewBox", `${-box[2]} ${-box[2]} ${box[0]} ${box[1]}`);
  add(k, "path", { class: "track", d: arc(r, start, start + sweep) });
  add(k, "path", { class: "value", d: arc(r, start, angle) });
  add(k, "line", { class: "needle", x1: 0, y1: big ? -4 : 0, x2: 0, y2: -r, transform: `rotate(${angle})` });
});

const sources = [["Amp", "blue"], ["Env 2", "blue"], ["Env 3", "blue"], ["LFO 1", "orange"], ["LFO 2", "orange"], ["Vel", "green"], ["Note", "green"], ["PB", "green"], ["AT", "green"], ["Mod", "green"], ["Rand", "green"]];
const targets = [
  ["Osc 1 Pos", 36, { 1: 47, 8: 20 }],
  ["Osc 1 Gain", 100, { 1: 100, 5: 72 }],
  ["Osc 2 Pos", 56, { 1: -33, 3: 44 }],
  ["Sub Tone", 0, { 4: 39, 9: 100 }],
  ["Filter 1 Freq", 77, { 5: 55, 9: 50 }],
  ["Filter 2 Freq", 96, { 1: 73, 2: 56, 3: 59 }],
  ["Amp", 70, { 5: 50 }]
];
let html = "<thead><tr><th>Target</th>" + sources.map(s => `<th class="c-${s[1]}"><span>${s[0]}</span></th>`).join("") + "</tr></thead><tbody>";
targets.forEach(([name, level, set]) => {
  html += `<tr${level ? "" : ' class="hot"'}><th style="background-image:linear-gradient(90deg,#3e3e3e ${level}%,transparent ${level}%)">${name}</th>`;
  sources.forEach((s, i) => {
    if (!(i in set)) { html += "<td></td>"; return; }
    const v = set[i], a = Math.min(50, 50 + v / 2), b = Math.max(50, 50 + v / 2);
    html += `<td class="set c-${s[1]}" style="background-image:linear-gradient(90deg,var(--bar) ${a}%,currentColor ${a}% ${b}%,var(--bar) ${b}%)">${v}</td>`;
  });
  html += "</tr>";
});
document.getElementById("matrix").innerHTML = html + "</tbody>";
```
